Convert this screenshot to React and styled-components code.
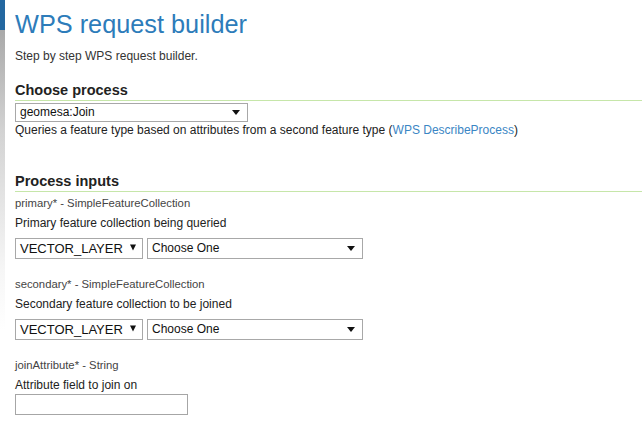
import React from "react";
import styled, { createGlobalStyle } from "styled-components";

const Global = createGlobalStyle`
  html, body { margin: 0; padding: 0; background: #fff; }
  body { font-family: "Liberation Sans", Arial, sans-serif; color: #333; }
  #root { min-height: 424px; }
`;

const Frame = styled.div`
  display: flex;
  min-height: 424px;
  overflow: hidden;
`;

const Edge = styled.div`
  flex: none;
  width: 5px;
  background: linear-gradient(
    to bottom,
    #2367a0 0,
    #2367a0 30px,
    #a9a9a9 30px,
    #d2d2d2 130px,
    #f6f6f6 270px,
    #ffffff 330px
  );
`;

const Panel = styled.main`
  flex: 1;
  min-width: 0;
  background: #fff;
  border-top-left-radius: 5px;
  padding: 8px 0 0 10px;
`;

const Title = styled.h1`
  margin: 0;
  font-size: 25.3px;
  line-height: 32px;
  font-weight: normal;
  color: #2d7cba;
`;

const Intro = styled.p`
  margin: 8px 0 0;
  font-size: 12px;
  line-height: 16px;
  color: #333;
`;

const SectionTitle = styled.h2`
  margin: ${(p) => p.$top}px 0 0;
  font-size: 14.5px;
  line-height: 20px;
  font-weight: bold;
  color: #222;
  border-bottom: 1px solid #c6e6a9;
`;

const Desc = styled.p`
  margin: ${(p) => p.$top || 0}px 0 0;
  font-size: 12px;
  line-height: 16px;
  color: #222;
`;

const Link = styled.a`
  color: #3a86c4;
  text-decoration: none;
`;

const SelectBox = styled.div`
  box-sizing: border-box;
  display: flex;
  align-items: ${(p) => (p.$raised ? "flex-start" : "center")};
  justify-content: space-between;
  width: ${(p) => p.$width}px;
  height: ${(p) => p.$height}px;
  margin-top: ${(p) => p.$top || 0}px;
  padding: 0 ${(p) => p.$padRight}px 0 4px;
  border: 1px solid #a8a8a8;
  background: #fff;
  font-size: ${(p) => p.$size}px;
  line-height: ${(p) => p.$height - 2}px;
  color: #111;
  white-space: nowrap;
`;

const Arrow = styled.svg`
  flex: none;
  margin-top: ${(p) => (p.$raised ? "5px" : "0")};
`;

const Field = styled.section`
  margin-top: ${(p) => p.$top}px;
`;

const FieldLabel = styled.div`
  font-size: 11.3px;
  line-height: 14px;
  color: #444;
`;

const Row = styled.div`
  display: flex;
  gap: 4px;
  margin-top: 7px;
`;

const TextInput = styled.input`
  box-sizing: border-box;
  display: block;
  width: 173px;
  height: 21px;
  margin-top: 1px;
  border: 1px solid #a6a6a6;
  padding: 0 4px;
  font: inherit;
  font-size: 12px;
  background: #fff;
  outline: none;
`;

function Select({ value, width, height, size = 12, padRight = 7, raised, top }) {
  return (
    <SelectBox
      $width={width}
      $height={height}
      $size={size}
      $padRight={padRight}
      $raised={raised}
      $top={top}
    >
      <span>{value}</span>
      {raised ? (
        <Arrow $raised width="6" height="7" viewBox="0 0 6 7">
          <path d="M0 0.5 H6 L3 6.5 Z" fill="#111" />
        </Arrow>
      ) : (
        <Arrow width="8" height="5" viewBox="0 0 8 5">
          <path d="M0 0 H8 L4 5 Z" fill="#111" />
        </Arrow>
      )}
    </SelectBox>
  );
}

const fields = [
  {
    name: "primary*",
    type: "SimpleFeatureCollection",
    desc: "Primary feature collection being queried",
    kind: "layer",
  },
  {
    name: "secondary*",
    type: "SimpleFeatureCollection",
    desc: "Secondary feature collection to be joined",
    kind: "layer",
  },
  {
    name: "joinAttribute*",
    type: "String",
    desc: "Attribute field to join on",
    kind: "text",
  },
];

export default function App() {
  return (
    <>
      <Global />
      <Frame>
        <Edge />
        <Panel>
          <Title>WPS request builder</Title>
          <Intro>Step by step WPS request builder.</Intro>

          <SectionTitle $top={16}>Choose process</SectionTitle>
          <Select value="geomesa:Join" width={233} height={19} top={2} padRight={7} />
          <Desc>
            Queries a feature type based on attributes from a second feature type (
            <Link href="#">WPS DescribeProcess</Link>)
          </Desc>

          <SectionTitle $top={33}>Process inputs</SectionTitle>
          {fields.map((f, i) => (
            <Field key={f.name} $top={i === 0 ? 4 : 18}>
              <FieldLabel>
                {f.name} - {f.type}
              </FieldLabel>
              <Desc $top={5}>{f.desc}</Desc>
              {f.kind === "layer" ? (
                <Row>
                  <Select value="VECTOR_LAYER" width={128} height={21} size={13} padRight={6} raised />
                  <Select value="Choose One" width={216} height={21} padRight={7} />
                </Row>
              ) : (
                <TextInput type="text" />
              )}
            </Field>
          ))}
        </Panel>
      </Frame>
    </>
  );
}
